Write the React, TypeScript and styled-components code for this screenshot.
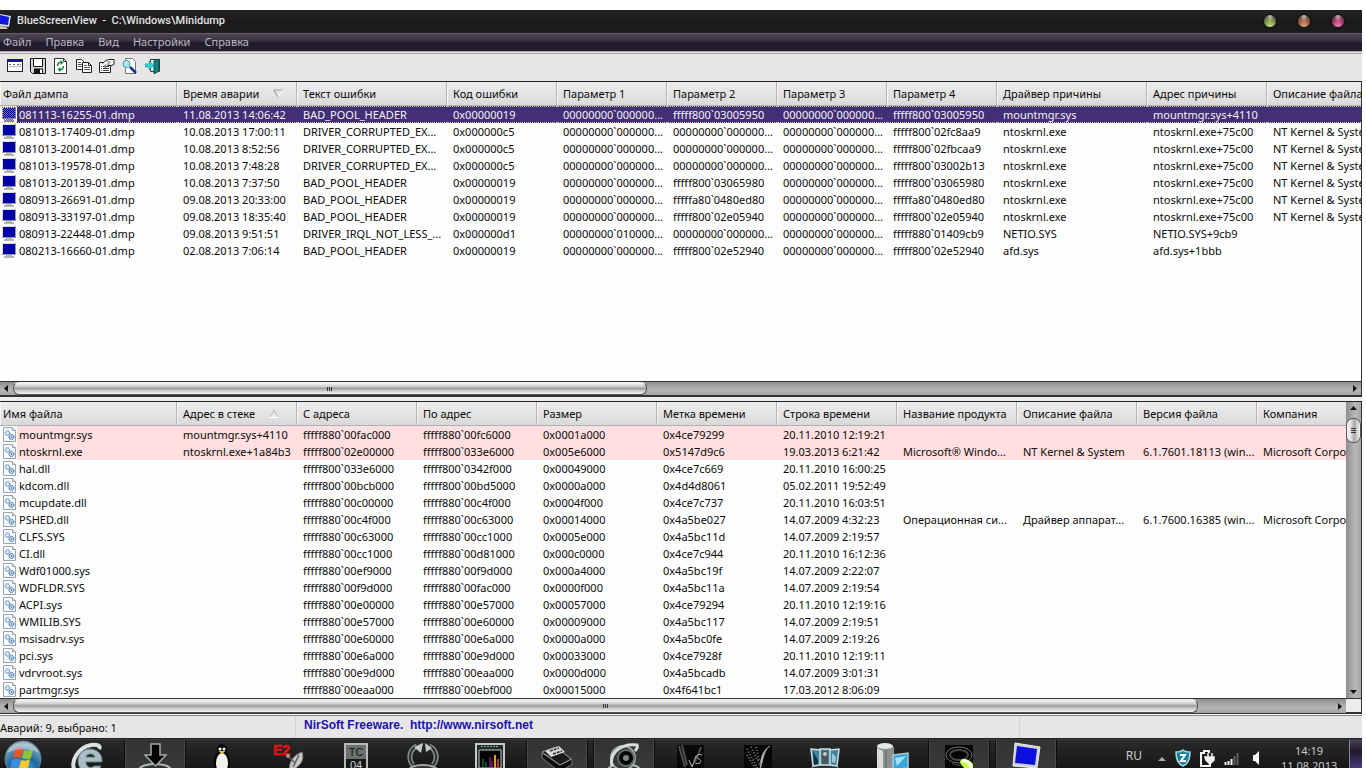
import React from "react";
import styled, { createGlobalStyle, css } from "styled-components";

const Global = createGlobalStyle`
  * { box-sizing: border-box; }
  html, body { margin: 0; background: #fff; }
  body { font: 11px/16px "Noto Sans", "Open Sans", sans-serif; color: #0a0a0a; }
  button { font: inherit; color: inherit; border: 0; padding: 0; background: none; }
  svg { display: block; flex: none; }
`;

const Desktop = styled.div`
  height: 100vh;
  padding: 10px 4px 0 0;
  display: flex;
  flex-direction: column;
  overflow: hidden;
`;

const AppWindow = styled.main`
  flex: 1;
  min-height: 0;
  display: flex;
  flex-direction: column;
  background: #e6e6e6;
`;

const TitleBar = styled.header`
  flex: none;
  height: 23px;
  padding: 0 17px 2px 0;
  display: flex;
  align-items: center;
  gap: 6px;
  background: linear-gradient(#222, #1a1a1a 50%, #1e1d1e);
  color: #e2e2e2;
`;

const Title = styled.h1`
  flex: 1;
  margin: 0;
  font: 500 11px/16px Roboto, "Noto Sans", sans-serif;
  white-space: pre;
`;

const Orbs = styled.div`
  display: flex;
  gap: 20px;
`;

const Orb = styled.button<{ $tint: string; $glow: string }>`
  width: 14px;
  height: 14px;
  border: 1px solid #111;
  border-radius: 50%;
  background:
    radial-gradient(ellipse at 50% 8%, #ffffffb0 0, #ffffff30 30%, transparent 50%),
    radial-gradient(circle at 50% 100%, ${(p) => p.$glow} 0, ${(p) => p.$tint} 55%, #4a4040 90%);
`;

const MenuBar = styled.nav`
  flex: none;
  height: 18px;
  padding: 0 0 2px 3px;
  display: flex;
  align-items: center;
  gap: 14px;
  border-top: 1px solid #655d6c;
  background: linear-gradient(#4b4453, #3a3342 40%, #211c2b 50%, #251e31);
  color: #bdb8c2;
`;

const ToolBar = styled.div`
  flex: none;
  height: 30px;
  padding: 0 7px 4px;
  display: flex;
  align-items: center;
  gap: 7px;
  border-top: 3px double #a8a2a8;
  background: #e7e7e7;
`;

const Pane = styled.section<{ $grow?: boolean }>`
  display: flex;
  flex-direction: column;
  border-top: 1px solid #222;
  border-right: 1px solid #333;
  border-bottom: 2px solid #333;
  background: #fdfdfd;
  ${(p) => (p.$grow ? css`flex: 1; min-height: 0;` : css`flex: none;`)}
`;

const PaneBody = styled.div`
  flex: 1;
  min-height: 0;
  display: flex;
`;

const TableClip = styled.div`
  flex: 1;
  min-width: 0;
  overflow: hidden;
`;

const Table = styled.table`
  width: 100%;
  table-layout: fixed;
  border-collapse: separate;
  border-spacing: 0;
`;

const HeadCell = styled.th`
  height: 24px;
  padding: 0 0 0 6px;
  border-right: 1px solid #b4b4b4;
  border-bottom: 1px solid #b0b0b0;
  box-shadow: inset 1px 0 #f6f6f6;
  background: linear-gradient(#ececec, #e4e4e4 50%, #d9d9d9);
  font-weight: 400;
  text-align: left;
  white-space: nowrap;
  overflow: hidden;
  &:first-child { padding-left: 3px; }
  &:last-child { border-right: 0; }
`;

const HeadLabel = styled.span`
  display: flex;
  align-items: center;
  gap: 14px;
`;

const Row = styled.tr<{ $tone?: "selected" | "stack" }>`
  ${(p) => p.$tone === "stack" && css`background: #ffdfdf;`}
  ${(p) =>
    p.$tone === "selected" &&
    css`
      color: #f4f2f8;
      background: #432f75;
      td { border-top: 1px dotted #cfc6a0; border-bottom: 1px dotted #cfc6a0; }
    `}
  ${(p) =>
    p.$tone &&
    css`
      td:first-child { background: linear-gradient(90deg, #fdfdfd 17px, transparent 17px); }
    `}
`;

const Cell = styled.td`
  height: 17px;
  padding: 0 0 0 6px;
  line-height: 15px;
  white-space: nowrap;
  overflow: hidden;
  &:first-child { padding-left: 2px; }
`;

const FileName = styled.span`
  display: flex;
  align-items: center;
  gap: 1px;
  height: 15px;
`;

const HBar = styled.div`
  flex: none;
  height: 14px;
  display: flex;
  align-items: stretch;
  border-top: 1px solid #333;
  background: linear-gradient(#8e8e8e, #b5b5b5 60%, #a5a5a5);
`;

const VBar = styled.div`
  flex: none;
  width: 15px;
  display: flex;
  flex-direction: column;
  background: linear-gradient(90deg, #8c8c8c, #b8b8b8 60%, #a6a6a6);
`;

const Arrow = styled.button`
  flex: none;
  min-width: 13px;
  min-height: 13px;
  display: grid;
  place-items: center;
`;

const Track = styled.div<{ $vertical?: boolean }>`
  flex: 1;
  display: flex;
  padding-top: ${(p) => (p.$vertical ? "3px" : "0")};
  flex-direction: ${(p) => (p.$vertical ? "column" : "row")};
`;

const HThumb = styled.div<{ $size: string }>`
  width: ${(p) => p.$size};
  display: grid;
  place-items: center;
  border: 1px solid #555;
  border-top-color: #eee;
  border-radius: 6px;
  background: linear-gradient(#f4f4f4, #d0d0d0 30%, #9c9c9c 50%, #c4c4c4 65%, #f4f4f4);
`;

const VThumb = styled.div`
  height: 25px;
  display: grid;
  place-items: center;
  border: 1px solid #555;
  border-radius: 7px;
  background: linear-gradient(90deg, #fafafa, #d8d8d8 35%, #a9a9a9 55%, #f2f2f2);
`;

const Corner = styled.div`
  flex: none;
  width: 15px;
  background: #ececec;
`;

const Splitter = styled.div`
  flex: none;
  height: 4px;
  background: #ededed;
`;

const StatusBar = styled.footer`
  flex: none;
  height: 25px;
  padding-top: 2px;
  display: flex;
  border-bottom: 1px solid #222;
  background: linear-gradient(#fafafa 0 1px, #8a868a 1px 2px, #e6e6e6 2px);
`;

const StatusPart = styled.div<{ $width?: string }>`
  width: ${(p) => p.$width ?? "auto"};
  line-height: 24px;
  border-right: 1px solid #d4d4d4;
  overflow: hidden;
  white-space: pre;
  &:last-child { border-right: 0; }
`;

const SiteLink = styled.a`
  display: block;
  padding-left: 8px;
  font: bold 11px/18px "Liberation Sans", Arial, sans-serif;
  font-size: 12px;
  color: #1a12b0;
  text-decoration: none;
`;

const TaskBar = styled.div`
  flex: none;
  height: 29px;
  display: flex;
  overflow: hidden;
  border-top: 1px solid #3a3a3a;
  background: linear-gradient(#2a2a2a, #171717);
  color: #c9c9c9;
`;

const StartButton = styled.button`
  width: 46px;
  height: 38px;
  margin-right: 12px;
  display: grid;
  justify-content: center;
`;

const TaskButtons = styled.div`
  flex: 1;
  display: flex;
  gap: 7px;
`;

const TaskButton = styled.button<{ $open?: boolean }>`
  width: 60px;
  height: 38px;
  display: grid;
  justify-content: center;
  align-content: start;
  padding-top: 1px;
  ${(p) =>
    p.$open &&
    css`
      background: linear-gradient(#333, #3c3c3c);
      box-shadow: -1px 0 #0c0c0c, 1px 0 #0c0c0c, inset 1px 0 #484848, inset -1px 0 #484848;
    `}
`;

const Tray = styled.div`
  display: flex;
  gap: 8px;
  padding-top: 9px;
  margin-right: 17px;
`;

const Language = styled.span`
  margin-right: 8px;
  font-size: 12px;
  line-height: 14px;
`;

const Clock = styled.time`
  width: 56px;
  padding-top: 3px;
  margin-right: 12px;
  text-align: center;
  line-height: 15px;
  white-space: pre-line;
`;

const ShowDesktop = styled.button`
  width: 13px;
  border-left: 1px solid #8c8798;
  background: linear-gradient(#4a4358, #1e182c 40%, #4b3a7c);
`;

const MonitorIcon = ({ dim }: { dim?: boolean }) => (
  <svg width="16" height="15" viewBox="0 0 16 15" aria-hidden="true">
    <defs>
      <pattern id="dither" width="2" height="2" patternUnits="userSpaceOnUse">
        <path d="M0 0h1v1H0zM1 1h1v1H1z" fill="#6a5ba8" />
      </pattern>
    </defs>
    <rect x="0" y="0" width="14" height="12" fill="#dcdce4" />
    <rect x="1" y="1" width="12" height="10" fill="#0000a8" />
    <path d="M0 11.500h14M13.500 0v12" stroke="#9a9aa4" />
    <path d="M4 12h6v1h2v2H2v-2h2z" fill="#b4b4b4" />
    {dim && <path d="M0 0h14v12h-2v3H2v-3H0z" fill="url(#dither)" />}
  </svg>
);

const ModuleIcon = () => (
  <svg width="16" height="15" viewBox="0 0 16 15" aria-hidden="true">
    <path d="M1.500 .5h9l3 3v11h-12z" fill="#f7fafc" stroke="#9aa4ae" />
    <path d="M10.500 .5v3h3" fill="#dfe5ea" stroke="#9aa4ae" />
    <circle cx="5.500" cy="6" r="2.200" fill="#dceaf7" stroke="#3f6fa6" strokeDasharray="1.400 .5" />
    <circle cx="9.500" cy="10" r="2.500" fill="#c5ddf3" stroke="#2f629c" strokeDasharray="1.500 .5" />
    <circle cx="9.500" cy="10" r=".8" fill="#2f629c" />
  </svg>
);

const TriangleIcon = ({ up }: { up?: boolean }) => (
  <svg width="10" height="9" viewBox="0 0 10 9" aria-hidden="true">
    {up ? (
      <>
        <path d="M5 1l4 7H1z" fill="#e4e4e4" stroke="#fff" />
        <path d="M9 8L5 1 1 8" fill="none" stroke="#b5b5b5" />
        <path d="M.5 8.500h9" stroke="#fff" />
      </>
    ) : (
      <>
        <path d="M.8 1h8.400L5 8z" fill="#e2e2e2" stroke="#fff" />
        <path d="M9.500 1H.8L5 8" fill="none" stroke="#8c8c8c" />
      </>
    )}
  </svg>
);

const arrowPaths = {
  left: "M5 0v7L1 3.500z",
  right: "M2 0v7l4-3.500z",
  up: "M0 5h7L3.500 1z",
  down: "M0 2h7L3.500 6z",
};

const ArrowButton = ({ dir }: { dir: keyof typeof arrowPaths }) => (
  <Arrow aria-label={dir}>
    <svg width="7" height="7" viewBox="0 0 7 7"><path d={arrowPaths[dir]} fill="#141414" /></svg>
  </Arrow>
);

const Grip = ({ vertical }: { vertical?: boolean }) => (
  <svg width="6" height="6" viewBox="0 0 6 6">
    <path d={vertical ? "M0 .5h5M0 2.500h5M0 4.500h5" : "M.5 1v4M2.500 1v4M4.500 1v4"} stroke="#333" />
  </svg>
);

const toolIcons: [string, React.ReactNode][] = [
  ["Свойства окна", <>
    <rect x=".5" y="1.500" width="15" height="12" fill="#fff" stroke="#222" />
    <path d="M1 3h14" stroke="#17178f" strokeWidth="2" />
    <path d="M2 6.500h3m1 0h3m1 0h4" stroke="#5a6390" strokeDasharray="2 1" /><path d="M2 8.500h12" stroke="#b4bacb" />
  </>],
  ["Сохранить", <>
    <path d="M.5 .5h15v15h-13l-2-2z" fill="#d4d4d4" stroke="#111" />
    <path d="M3.500 1v7.500h9V1" fill="#fff" stroke="#111" />
    <path d="M4 15.500v-5h9v5z" fill="#111" /><path d="M10 11.500h2V15h-2z" fill="#fff" />
  </>],
  ["Обновить", <>
    <path d="M1.500 .5h9l3 3v12h-12z" fill="#fff" stroke="#333" />
    <path d="M10.500 .5v3h3" fill="none" stroke="#333" />
    <path d="M4.500 8c0-3 2-4 4-3.500M10.500 8c0 3-2 4-4 3.500" fill="none" stroke="#118a3c" strokeWidth="1.500" />
    <path d="M7.500 2l3 2.500-3 2.500zM7.500 14l-3-2.500 3-2.500z" fill="#118a3c" />
  </>],
  ["Копировать", <>
    <path d="M.5 1.500h5l3 3v7h-8z" fill="#fff" stroke="#222" /><path d="M2 4.500h3M2 6.500h4M2 8.500h4" stroke="#555" />
    <path d="M6.500 4.500h6l3 3v7h-9z" fill="#fff" stroke="#222" /><path d="M8 7.500h3M8 9.500h6M8 11.500h6" stroke="#555" />
    <path d="M12.500 4.500v3h3" fill="none" stroke="#222" />
  </>],
  ["Свойства", <>
    <path d="M.5 4.500h11v10H.5z" fill="#fff" stroke="#222" />
    <path d="M2 8.500h1m1 0h6M2 10.500h1m1 0h6M2 12.500h1m1 0h6" stroke="#444" />
    <path d="M3.500 5.500L7 2.500l3-1h5v5l-3 1H9l-3 2-1-1 2-2" fill="#fff" stroke="#222" /><path d="M8 4h4M8 6h3" stroke="#777" />
  </>],
  ["Найти", <>
    <path d="M3.500 .5h7l3 3v12h-10z" fill="#fff" stroke="#777" />
    <path d="M8 9l6 6" stroke="#15308f" strokeWidth="2.500" />
    <circle cx="4.500" cy="6" r="3.500" fill="#9ff0f4" stroke="#4b8ba0" /><path d="M3 5.500l2-2" stroke="#fff" />
  </>],
  ["Выход", <>
    <path d="M5.500 1.500h9v12h-9z" fill="#eef2f2" stroke="#333" />
    <path d="M9 3l5-2v12l-5 3z" fill="#12837f" stroke="#0a5250" />
    <path d="M0 6h4V3l5 4.500L4 12V9H0z" fill="#2fd6dc" stroke="#148e96" strokeWidth=".6" />
  </>],
];

const base = <ellipse cx="18" cy="29" rx="16" ry="6" fill="#2e3232" stroke="#b2b7b7" strokeWidth="2" />;

const taskIcons: [string, boolean, React.ReactNode][] = [
  ["Internet Explorer", false, <>
    <path d="M5 30c-5-9 2-23 16-26 7-1 10 1 8 4" fill="none" stroke="#dbe0e2" strokeWidth="4" />
    <path d="M32 19c0-6-5-11-12-11S8 13 8 20s5 12 12 12c5 0 9-2 11-7h-7c-3 3-8 1-8-4h16zM16 16c1-4 8-4 9 0z" fill="#a7bfc5" stroke="#607a80" />
  </>],
  ["Загрузки", true, <>{base}<path d="M14 3h9v11h6L18.500 25 8 14h6z" fill="#020202" stroke="#a8a8a8" strokeWidth="1.500" /></>],
  ["Linux", false, <>
    <ellipse cx="18" cy="21" rx="8" ry="12" fill="#050505" /><ellipse cx="18" cy="9" rx="5" ry="6" fill="#050505" />
    <ellipse cx="18" cy="22" rx="6" ry="10" fill="#f3f3ee" /><circle cx="16" cy="8" r="1.500" fill="#fff" /><circle cx="20" cy="8" r="1.500" fill="#fff" />
    <path d="M14.500 10h7L18 13z" fill="#ecc51c" />
  </>],
  ["E2", false, <>
    <text x="2" y="14" fill="#e01212" stroke="#e01212" strokeWidth=".5" fontFamily="Liberation Sans, Arial, sans-serif" fontWeight="700" fontSize="14">E2</text>
    <path d="M31 11c3 8-2 15-12 19-2-7 2-15 12-19z" fill="#c6c8c8" stroke="#777" /><path d="M17 15l7 7M28 14l-6 12" stroke="#5d6060" strokeWidth="1.500" /><circle cx="17" cy="15" r="2" fill="#999" />
  </>],
  ["TC", false, <>
    <path d="M7 3h22v30H7z" fill="#6e7070" stroke="#b8b8b8" strokeWidth="2" /><path d="M8 18h20v14H8z" fill="#171717" />
    <g fontFamily="Liberation Sans, Arial, sans-serif" fontSize="11" textAnchor="middle"><text x="18" y="15" fill="#111">TC</text><text x="18" y="28" fill="#d0d0d0">04</text></g>
  </>],
  ["Перезагрузка", false, <>
    <path d="M12 5a12 12 0 0 0-4 19M24 5a12 12 0 0 1 4 19" fill="none" stroke="#8a9090" strokeWidth="5" />
    <path d="M12 5a12 12 0 0 0-4 19M24 5a12 12 0 0 1 4 19" fill="none" stroke="#2d3131" strokeWidth="2" />
    <path d="M18 2l-2 10-7-6zM20 2l7 5-6 4z" fill="#c6cbcb" /><ellipse cx="18" cy="29" rx="14" ry="5" fill="#2e3232" stroke="#a2a7a7" strokeWidth="2" />
  </>],
  ["Монитор системы", false, <>
    <path d="M4 3h28v29H4z" fill="#242929" stroke="#c4c9c9" strokeWidth="2" /><path d="M7 9h22v18H7z" fill="#030303" stroke="#c4c9c9" />
    <path d="M9 5.500h18" stroke="#69b5a4" strokeDasharray="2 1" /><path d="M11 27v-9M14 27v-6" stroke="#2b9a56" /><path d="M18 27V16M20 27v-7" stroke="#b32bb3" /><path d="M23 27V14" stroke="#dc9d20" strokeWidth="2" /><path d="M26 27V18" stroke="#c43622" strokeWidth="2" />
  </>],
  ["Чип", true, <>
    <path d="M3 12l18 12 12-6v5l-12 8L3 17z" fill="#0c0c0c" stroke="#777" />
    <path d="M3 11l14-5 15 12-11 6z" fill="#1a1a1a" stroke="#999" />
    <path d="M6 10l14-5 6 6-14 5z" fill="#d8d8d8" /><path d="M11 10l9-3m-6 6l9-3" stroke="#333" strokeDasharray="3 1" strokeWidth="1.500" />
  </>],
  ["Камера", true, <>
    {base}<circle cx="17" cy="17" r="12" fill="#343838" stroke="#a1a7a7" strokeWidth="2" /><circle cx="20" cy="17" r="8" fill="#050505" stroke="#646a6a" strokeWidth="2" /><circle cx="20" cy="17" r="3" fill="#7d8585" /><path d="M6 25C3 12 15 2 31 4c1 2 0 4-2 6" fill="none" stroke="#d7dcdc" strokeWidth="3" />
  </>],
  ["VS", false, <>
    <path d="M4 4h27v30H4z" fill="#080808" /><path d="M6 5l6 21M9 4l5 20M28 6l-6 15" stroke="#4f4f4f" strokeWidth="2" /><path d="M16 19l3 7 4-11M29 14c-5-2-7 2-3 4s1 6-4 4" fill="none" stroke="#b9b9b9" />
  </>],
  ["Искры", false, <>
    <path d="M4 4h28v30H4z" fill="#060606" /><path d="M7 8l12 22M11 6l9 18M16 6l3 13M7 14l9 14" stroke="#777" strokeDasharray="1 2" strokeWidth="2" /><path d="M30 5c-6 4-7 14-10 25 0-9 1-20 10-25z" fill="#d5d5d5" stroke="#888" strokeDasharray="3 1" />
  </>],
  ["Экраны", false, <>
    <ellipse cx="18" cy="28" rx="14" ry="5" fill="#2e3232" stroke="#8d9292" />
    <path d="M4 8l9 1v15l-7 1zM13 8h10v16H13zM23 9l9-1-2 17-7-1z" fill="#3f839c" stroke="#d0dce0" strokeWidth="1.500" /><path d="M15 10h6v13h-6z" fill="#4d5658" /><circle cx="18" cy="13" r="2" fill="#c8cccc" /><path d="M6 11l5 8v4l-4 1z" fill="#14313f" /><path d="M25 12l4 4-1 6-3-1z" fill="#9cc9da" />
  </>],
  ["Компьютер", false, <>
    <path d="M3 6l8-3 9 3v28H3z" fill="#8b908f" /><path d="M3 7l6 3v24H3z" fill="#dadcdb" /><path d="M12 9v25" stroke="#5d6261" /><ellipse cx="11" cy="5" rx="8" ry="3" fill="#e5e7e5" />
    <path d="M19 14l15-2v15l-15 2z" fill="#39a5dc" stroke="#acc6d1" strokeWidth="1.500" /><path d="M21 17l11-2-9 10z" fill="#a3e2f8" />
  </>],
  ["Запись", true, <>
    <path d="M4 4h28v30H4z" fill="#050505" /><ellipse cx="18" cy="14" rx="13" ry="8" fill="none" stroke="#717571" /><ellipse cx="18" cy="14" rx="9" ry="5" fill="none" stroke="#464946" strokeWidth="2" /><path d="M11 22c4 3 10 3 14 0" stroke="#555955" fill="none" />
    <path d="M19 20c3-3 10-2 13 3v11h-6c2-6-7-8-7-14z" fill="#c9ff4a" /><path d="M21 20c4-1 8 1 9 7" stroke="#fbfff0" strokeWidth="3" fill="none" />
  </>],
  ["BlueScreenView", true, <>
    <path d="M7 2l25 4-3 21-24-2z" fill="#cfd1d6" stroke="#ededed" /><path d="M9 5l20 3-2 16-20-2z" fill="#0c10df" /><path d="M12 27h11l5 5H10z" fill="#d8d6c9" />
  </>],
];

const dumpHead = ["Файл дампа", "Время аварии", "Текст ошибки", "Код ошибки", "Параметр 1", "Параметр 2", "Параметр 3", "Параметр 4", "Драйвер причины", "Адрес причины", "Описание файла"];
const dumpCols = [177, 120, 150, 110, 110, 110, 110, 110, 150, 120];
const zeros = "00000000`000000...";
const kernel = ["ntoskrnl.exe", "ntoskrnl.exe+75c00", "NT Kernel & System"];
const dumps = [
  ["081113-16255-01.dmp", "11.08.2013 14:06:42", "BAD_POOL_HEADER", "0x00000019", zeros, "fffff800`03005950", zeros, "fffff800`03005950", "mountmgr.sys", "mountmgr.sys+4110", ""],
  ["081013-17409-01.dmp", "10.08.2013 17:00:11", "DRIVER_CORRUPTED_EX...", "0x000000c5", zeros, zeros, zeros, "fffff800`02fc8aa9", ...kernel],
  ["081013-20014-01.dmp", "10.08.2013 8:52:56", "DRIVER_CORRUPTED_EX...", "0x000000c5", zeros, zeros, zeros, "fffff800`02fbcaa9", ...kernel],
  ["081013-19578-01.dmp", "10.08.2013 7:48:28", "DRIVER_CORRUPTED_EX...", "0x000000c5", zeros, zeros, zeros, "fffff800`03002b13", ...kernel],
  ["081013-20139-01.dmp", "10.08.2013 7:37:50", "BAD_POOL_HEADER", "0x00000019", zeros, "fffff800`03065980", zeros, "fffff800`03065980", ...kernel],
  ["080913-26691-01.dmp", "09.08.2013 20:33:00", "BAD_POOL_HEADER", "0x00000019", zeros, "fffffa80`0480ed80", zeros, "fffffa80`0480ed80", ...kernel],
  ["080913-33197-01.dmp", "09.08.2013 18:35:40", "BAD_POOL_HEADER", "0x00000019", zeros, "fffff800`02e05940", zeros, "fffff800`02e05940", ...kernel],
  ["080913-22448-01.dmp", "09.08.2013 9:51:51", "DRIVER_IRQL_NOT_LESS_...", "0x000000d1", "00000000`010000...", zeros, zeros, "fffff880`01409cb9", "NETIO.SYS", "NETIO.SYS+9cb9", ""],
  ["080213-16660-01.dmp", "02.08.2013 7:06:14", "BAD_POOL_HEADER", "0x00000019", zeros, "fffff800`02e52940", zeros, "fffff800`02e52940", "afd.sys", "afd.sys+1bbb", ""],
];

const moduleHead = ["Имя файла", "Адрес в стеке", "С адреса", "По адрес", "Размер", "Метка времени", "Строка времени", "Название продукта", "Описание файла", "Версия файла", "Компания"];
const moduleCols = [177, 120, 120, 120, 120, 120, 120, 120, 120, 120];
const modules = [
  ["mountmgr.sys", "mountmgr.sys+4110", "fffff880`00fac000", "fffff880`00fc6000", "0x0001a000", "0x4ce79299", "20.11.2010 12:19:21"],
  ["ntoskrnl.exe", "ntoskrnl.exe+1a84b3", "fffff800`02e00000", "fffff800`033e6000", "0x005e6000", "0x5147d9c6", "19.03.2013 6:21:42", "Microsoft® Windo...", "NT Kernel & System", "6.1.7601.18113 (win...", "Microsoft Corporation"],
  ["hal.dll", "", "fffff800`033e6000", "fffff800`0342f000", "0x00049000", "0x4ce7c669", "20.11.2010 16:00:25"],
  ["kdcom.dll", "", "fffff800`00bcb000", "fffff800`00bd5000", "0x0000a000", "0x4d4d8061", "05.02.2011 19:52:49"],
  ["mcupdate.dll", "", "fffff880`00c00000", "fffff880`00c4f000", "0x0004f000", "0x4ce7c737", "20.11.2010 16:03:51"],
  ["PSHED.dll", "", "fffff880`00c4f000", "fffff880`00c63000", "0x00014000", "0x4a5be027", "14.07.2009 4:32:23", "Операционная си...", "Драйвер аппарат...", "6.1.7600.16385 (win...", "Microsoft Corporation"],
  ["CLFS.SYS", "", "fffff880`00c63000", "fffff880`00cc1000", "0x0005e000", "0x4a5bc11d", "14.07.2009 2:19:57"],
  ["CI.dll", "", "fffff880`00cc1000", "fffff880`00d81000", "0x000c0000", "0x4ce7c944", "20.11.2010 16:12:36"],
  ["Wdf01000.sys", "", "fffff880`00ef9000", "fffff880`00f9d000", "0x000a4000", "0x4a5bc19f", "14.07.2009 2:22:07"],
  ["WDFLDR.SYS", "", "fffff880`00f9d000", "fffff880`00fac000", "0x0000f000", "0x4a5bc11a", "14.07.2009 2:19:54"],
  ["ACPI.sys", "", "fffff880`00e00000", "fffff880`00e57000", "0x00057000", "0x4ce79294", "20.11.2010 12:19:16"],
  ["WMILIB.SYS", "", "fffff880`00e57000", "fffff880`00e60000", "0x00009000", "0x4a5bc117", "14.07.2009 2:19:51"],
  ["msisadrv.sys", "", "fffff880`00e60000", "fffff880`00e6a000", "0x0000a000", "0x4a5bc0fe", "14.07.2009 2:19:26"],
  ["pci.sys", "", "fffff880`00e6a000", "fffff880`00e9d000", "0x00033000", "0x4ce7928f", "20.11.2010 12:19:11"],
  ["vdrvroot.sys", "", "fffff880`00e9d000", "fffff880`00eaa000", "0x0000d000", "0x4a5bcadb", "14.07.2009 3:01:31"],
  ["partmgr.sys", "", "fffff880`00eaa000", "fffff880`00ebf000", "0x00015000", "0x4f641bc1", "17.03.2012 8:06:09"],
];

type GridProps = {
  head: string[];
  cols: number[];
  rows: string[][];
  sortUp?: boolean;
  tone: (i: number) => "selected" | "stack" | undefined;
  icon: (i: number) => React.ReactNode;
};

const DataGrid = ({ head, cols, rows, sortUp, tone, icon }: GridProps) => (
  <TableClip>
    <Table>
      <colgroup>
        {cols.map((w, i) => <col key={i} width={w} />)}
        <col />
      </colgroup>
      <thead>
        <tr>
          {head.map((h, i) => (
            <HeadCell key={h} scope="col">
              {i === 1 ? <HeadLabel>{h}<TriangleIcon up={sortUp} /></HeadLabel> : h}
            </HeadCell>
          ))}
        </tr>
      </thead>
      <tbody>
        {rows.map((r, i) => (
          <Row key={r[0]} $tone={tone(i)}>
            {head.map((h, c) => (
              <Cell key={h}>{c === 0 ? <FileName>{icon(i)}{r[0]}</FileName> : r[c]}</Cell>
            ))}
          </Row>
        ))}
      </tbody>
    </Table>
  </TableClip>
);

const HScroll = ({ size }: { size: string }) => (
  <>
    <ArrowButton dir="left" />
    <Track><HThumb $size={size}><Grip /></HThumb></Track>
    <ArrowButton dir="right" />
  </>
);

const FlexBar = styled(HBar)`
  flex: 1;
  border-top: 0;
`;

export default function App() {
  return (
    <Desktop>
      <Global />
      <AppWindow>
        <TitleBar>
          <svg width="11" height="16" viewBox="0 0 11 16" aria-hidden="true">
            <path d="M0 1l11 2-2 11-9-1z" fill="#d5d7dc" /><path d="M0 2l9 2-1 8-8-1z" fill="#1216dc" /><path d="M0 13l6 1 2 2H0z" fill="#ccc8b4" />
          </svg>
          <Title>{"BlueScreenView  -  C:\\Windows\\Minidump"}</Title>
          <Orbs>
            <Orb aria-label="Свернуть" $tint="#71853c" $glow="#d3ee8c" />
            <Orb aria-label="Развернуть" $tint="#93563a" $glow="#f0a682" />
            <Orb aria-label="Закрыть" $tint="#a52f63" $glow="#ff8abd" />
          </Orbs>
        </TitleBar>
        <MenuBar>
          {["Файл", "Правка", "Вид", "Настройки", "Справка"].map((m) => <button key={m}>{m}</button>)}
        </MenuBar>
        <ToolBar>
          {toolIcons.map(([name, art]) => (
            <button key={name} aria-label={name}><svg width="16" height="16" viewBox="0 0 16 16">{art}</svg></button>
          ))}
        </ToolBar>
        <Pane $grow>
          <PaneBody>
            <DataGrid head={dumpHead} cols={dumpCols} rows={dumps} tone={(i) => (i === 0 ? "selected" : undefined)} icon={(i) => <MonitorIcon dim={i === 0} />} />
          </PaneBody>
          <HBar><HScroll size="47.5%" /></HBar>
        </Pane>
        <Splitter />
        <Pane>
          <PaneBody>
            <DataGrid head={moduleHead} cols={moduleCols} rows={modules} sortUp tone={(i) => (i < 2 ? "stack" : undefined)} icon={() => <ModuleIcon />} />
            <VBar>
              <ArrowButton dir="up" />
              <Track $vertical><VThumb><Grip vertical /></VThumb></Track>
              <ArrowButton dir="down" />
            </VBar>
          </PaneBody>
          <HBar><FlexBar><HScroll size="89.8%" /></FlexBar><Corner /></HBar>
        </Pane>
        <StatusBar>
          <StatusPart $width="296px">Аварий: 9, выбрано: 1</StatusPart>
          <StatusPart $width="724px"><SiteLink href="http://www.nirsoft.net">{"NirSoft Freeware.  http://www.nirsoft.net"}</SiteLink></StatusPart>
          <StatusPart />
        </StatusBar>
      </AppWindow>
      <TaskBar>
        <StartButton aria-label="Пуск">
          <svg width="40" height="38" viewBox="0 0 40 38">
            <defs>
              <radialGradient id="orb" cx=".5" cy=".85" r=".85"><stop offset="0" stopColor="#45c4f0" /><stop offset=".5" stopColor="#20679f" /><stop offset="1" stopColor="#9fb9c6" /></radialGradient>
            </defs>
            <circle cx="20" cy="19" r="18" fill="url(#orb)" stroke="#5f7f90" />
            <path d="M12 9c3-2 6-1 8 0l-2 9c-3-1-5-1-8 0z" fill="#e8552b" /><path d="M21 10c3 1 6 1 9-1l-2 9c-3 2-6 1-9 0z" fill="#8ac43c" />
            <path d="M9 20c3-2 6-1 8 0l-2 8c-3-1-5-1-8 0z" fill="#3c8edc" /><path d="M18 20c3 1 6 1 9-1l-2 9c-3 2-6 1-9 0z" fill="#f8c72c" />
            <path d="M4 13C8 0 32 0 36 13 26 8 14 8 4 13z" fill="#fff" opacity=".35" />
          </svg>
        </StartButton>
        <TaskButtons>
          {taskIcons.map(([name, open, art]) => (
            <TaskButton key={name} aria-label={name} $open={open}><svg width="36" height="36" viewBox="0 0 36 36">{art}</svg></TaskButton>
          ))}
        </TaskButtons>
        <Tray>
          <Language>RU</Language>
          <svg width="8" height="16" viewBox="0 0 8 16"><path d="M4 8l4 4H0z" fill="#aaa" /></svg>
          <svg width="18" height="18" viewBox="0 0 16 18">
            <path d="M8 1c2 2 5 2 7 2 0 8-2 12-7 14C3 15 1 11 1 3c2 0 5 0 7-2z" fill="#1781a0" stroke="#a9d9e3" strokeWidth="1.500" /><path d="M5 6h5l-4 6h5" fill="none" stroke="#fff" strokeWidth="2" />
          </svg>
          <svg width="16" height="18" viewBox="0 0 16 18">
            <path d="M9 4V2H4v2H1v13h9v-4" fill="none" stroke="#f2f2f2" strokeWidth="2" /><path d="M5 8h9v3l-3 3H9l-3-3zM8 8V4m4 4V4M9.500 13v4" fill="#f2f2f2" stroke="#f2f2f2" strokeWidth="1.500" />
          </svg>
          <svg width="16" height="18" viewBox="0 0 16 18"><path d="M1.500 16v-3M4.500 16v-4M7.500 16v-6" stroke="#f5f5f5" strokeWidth="2" /><path d="M10.500 16V7M13.500 16V4" stroke="#606060" strokeWidth="2" /></svg>
          <svg width="16" height="18" viewBox="0 0 16 18"><path d="M5 6h2l4-4v14l-4-4H5z" fill="#f5f5f5" /></svg>
        </Tray>
        <Clock>{"14:19\n11.08.2013"}</Clock>
        <ShowDesktop aria-label="Показать рабочий стол" />
      </TaskBar>
    </Desktop>
  );
}
